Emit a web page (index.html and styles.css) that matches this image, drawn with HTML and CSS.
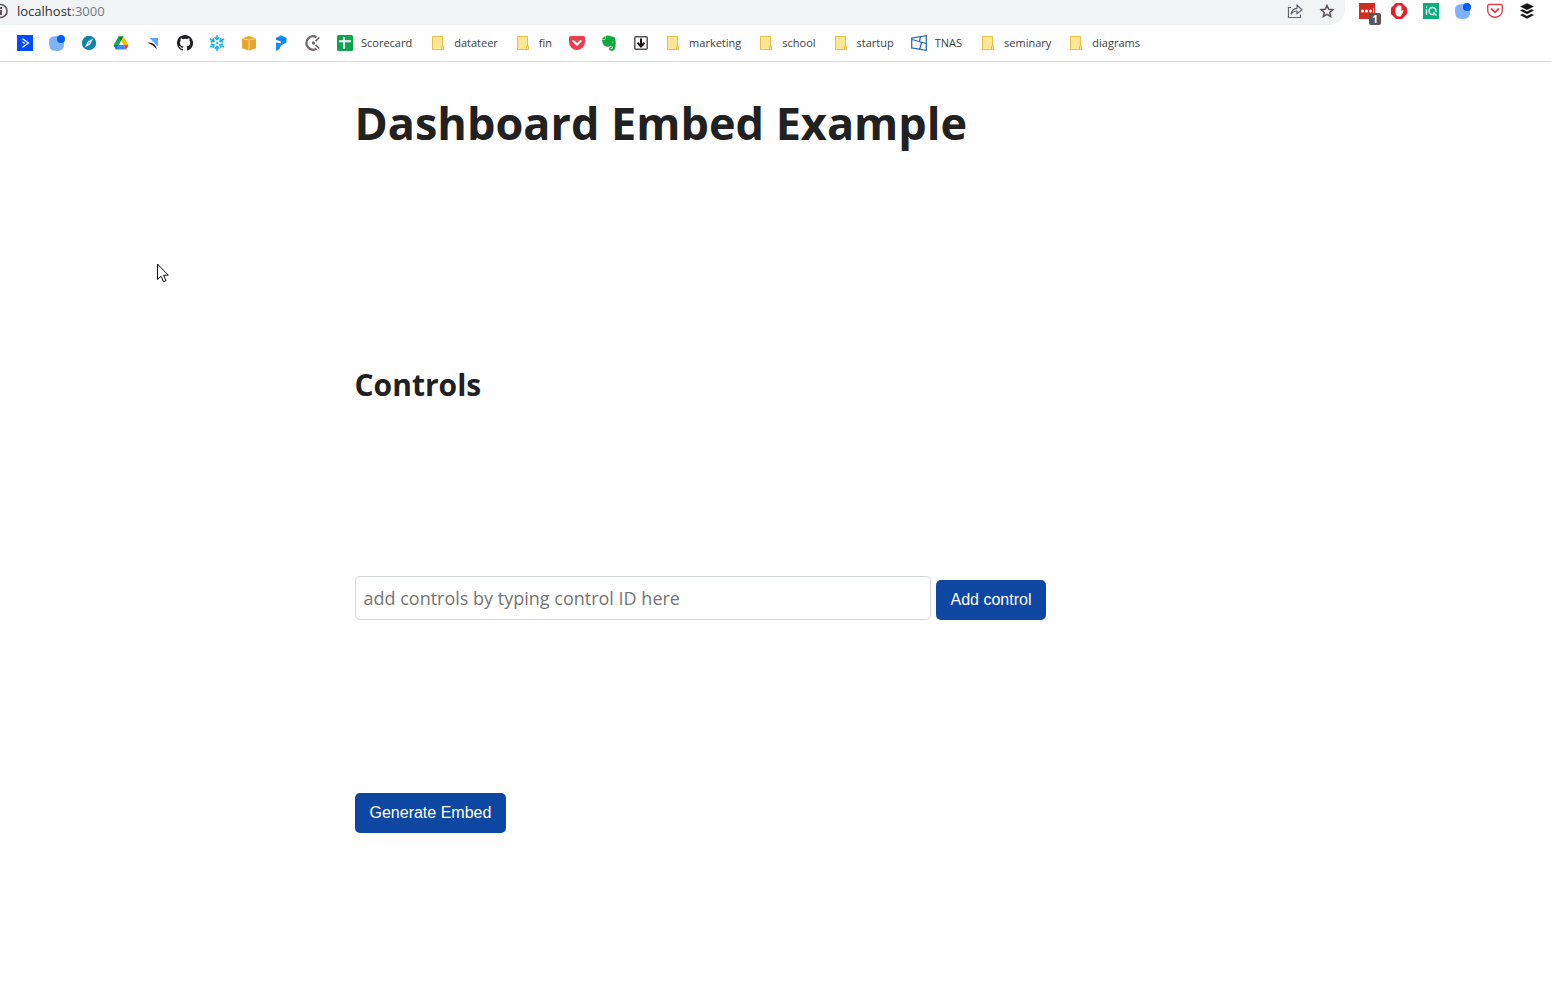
FILE: index.html
```html
<!DOCTYPE html>
<html lang="en">
<head>
<meta charset="utf-8">
<title>Dashboard Embed Example</title>
<link rel="stylesheet" href="styles.css">
</head>
<body>
<svg class="defs" aria-hidden="true">
  <symbol id="folder" viewBox="0 0 16 16"><path d="M2.500 1.500h10v9.500h1v3.500H2.500z" fill="#ffe694" stroke="#e9c046"/><path d="M11.500 14.500v-3.500h2v3.500z" fill="#ffe694" stroke="#e9c046"/></symbol>
  <symbol id="blob" viewBox="0 0 16 16"><path d="M4 1.500Q8 .5 12 1.500Q15 2 15 7V11Q14 16 8 16Q2 16 .8 13Q-.5 8 .5 4Q1 2 4 1.500Z" fill="#80b2fb"/><circle cx="12" cy="4" r="4" fill="#005cff"/></symbol>
</svg>
<header class="browser">
  <div class="toolbar">
    <div class="address">
      <svg class="info" viewBox="0 0 16 16" aria-hidden="true"><circle cx="8.500" cy="8" r="6.500" fill="none" stroke="#5f5357" stroke-width="1.600"/><path d="M9 4v2M9 7v5" stroke="#5f5357" stroke-width="2"/></svg>
      <span class="url">localhost<span class="port">:3000</span></span>
      <button class="tool" aria-label="Share"><svg viewBox="0 0 16 16"><path d="M4 4.500H1.500v10h12v-3M4 11.300C4.500 7.500 7 5.500 10 5.300V2.200l5 4.500-5 4V8C7.500 8 5.500 9 4 11.300z" fill="none" stroke="#62656b" stroke-width="1.200"/></svg></button>
      <button class="tool" aria-label="Bookmark this page"><svg viewBox="0 0 16 16"><path d="M8 2.500l1.700 3.800 4.100.4-3.100 2.700.9 4L8 11.300l-3.600 2.100.9-4-3.100-2.700 4.100-.4z" fill="none" stroke="#5f5357" stroke-width="1.500"/></svg></button>
    </div>
    <div class="extensions">
      <button class="tool" aria-label="Password manager"><svg viewBox="0 0 16 16"><path d="M0 0h16v16H0z" fill="#d32d1f"/><circle cx="3.500" cy="8" r="1.500" fill="#fff"/><circle cx="7.500" cy="8" r="1.500" fill="#fff"/><circle cx="11.500" cy="8" r="1.500" fill="#fff"/><path d="M14.500 5v5" stroke="#fff"/></svg><span class="badge">1</span></button>
      <button class="tool" aria-label="Ad blocker"><svg viewBox="0 0 16 16"><path d="M5 0h6l5 5v6l-5 5H5l-5-5V5z" fill="#e5202c"/><path d="M4.500 7.500V4.500q.8-1 1.400 0V3q.8-1 1.500 0v-.5q.8-1 1.500 0V3q.9-1 1.500 0v5l1.300-1q1 0 .8.800L10.800 12q-.7 1.500-2.600 1.500Q5 13.500 4.500 10z" fill="#fff"/></svg></button>
      <button class="tool" aria-label="iQ"><svg viewBox="0 0 16 16"><path d="M0 0h16v16H0z" fill="#05ae7a"/><path d="M3.500 6v6M3.500 3.500v1.300M11 11.500H9.500A3.500 3.500 0 1 1 13 8v1M10.500 9.500l3 3" fill="none" stroke="#fff" stroke-width="1.300"/></svg></button>
      <button class="tool" aria-label="Workspace"><svg><use href="#blob"/></svg></button>
      <button class="tool" aria-label="Save to Pocket"><svg viewBox="0 0 16 16"><path d="M2.200 1.500h11.600q1.500 0 1.500 1.500v4.500a7.300 6.800 0 0 1-14.600 0V3q0-1.500 1.500-1.500z" fill="none" stroke="#de4350" stroke-width="1.400"/><path d="M4.500 6l3.500 3.300L11.500 6" fill="none" stroke="#de4350" stroke-width="1.800" stroke-linecap="round"/></svg></button>
      <button class="tool" aria-label="Buffer"><svg viewBox="0 0 16 16"><path d="M8 .5l6.500 3L8 6.700 1.500 3.500zM1.500 7.500l2-.9L8 8.700l4.500-2.100 2 .9L8 10.900zM1.500 12l2-.9L8 13.200l4.500-2.100 2 .9L8 15.500z" fill="#111" stroke="#111" stroke-width=".4"/></svg></button>
    </div>
  </div>
  <nav class="bookmarks" aria-label="Bookmarks">
    <a href="#" aria-label="Console"><svg viewBox="0 0 16 16"><path d="M0 0h16v16H0z" fill="#004cff"/><path d="M5.500 3.800L11.500 8l-6 4.200M5.500 7l2.200 1.400" fill="none" stroke="#fff" stroke-width="1.300"/></svg></a>
    <a href="#" aria-label="Workspace"><svg><use href="#blob"/></svg></a>
    <a href="#" aria-label="Compass"><svg viewBox="0 0 16 16"><circle cx="8" cy="8" r="7.200" fill="#0d83ad"/><path d="M12 3.500L9.300 9.200 4 12.500l2.800-6z" fill="#fff"/><circle cx="8" cy="8" r=".8" fill="#0d83ad"/></svg></a>
    <a href="#" aria-label="Drive"><svg viewBox="0 0 16 16"><path d="M5.500 1.500h4.800L3.500 14.500H3L.7 10z" fill="#16a65a"/><path d="M5.500 1.500h5L8 6z" fill="#087b3a"/><path d="M10.500 1.500l5 8.500h-5L8 6z" fill="#ffbe05"/><path d="M.7 10h5L3 14.500z" fill="#1967d2"/><path d="M5.700 10h4.800l2.700 4.500H3z" fill="#4285f4"/><path d="M10.500 10h5l-2.300 4.500z" fill="#e94335"/></svg></a>
    <a href="#" aria-label="Prefect"><svg viewBox="0 0 16 16"><path d="M4.500 3H13v8.500z" fill="#62a9f4"/><path d="M2.500 7.500Q6.500 7 9 9t2.800 5.300L8.300 10.800z" fill="#162447"/></svg></a>
    <a href="#" aria-label="GitHub"><svg viewBox="0 0 16 16"><path d="M8 0C3.580 0 0 3.580 0 8c0 3.540 2.290 6.530 5.470 7.590.4.070.55-.17.55-.38V13.720c-2.010.37-2.530-.49-2.690-.94-.09-.23-.48-.94-.82-1.130-.28-.15-.68-.52-.01-.53.63-.01 1.080.58 1.230.82.72 1.210 1.870.87 2.330.66.07-.52.28-.87.51-1.070-1.780-.2-3.640-.89-3.640-3.950 0-.87.310-1.590.82-2.150-.08-.2-.36-1.020.08-2.120 0 0 .67-.21 2.200.82a7.600 7.600 0 0 1 4 0c1.530-1.040 2.200-.82 2.200-.82.44 1.100.16 1.920.08 2.120.51.560.82 1.270.82 2.150 0 3.070-1.870 3.750-3.650 3.950.29.250.54.73.54 1.480v2.210c0 .21.150.46.55.38A8 8 0 0 0 8 0z" fill="#211f27"/></svg></a>
    <a href="#" aria-label="Snowflake"><svg viewBox="0 0 16 16"><g fill="none" stroke="#12b0f5" stroke-width="1.500"><path id="flake" d="M8 0v4.500M5.700 2.200L8 4.600l2.300-2.400"/><use href="#flake" transform="rotate(60 8 8)"/><use href="#flake" transform="rotate(120 8 8)"/><use href="#flake" transform="rotate(180 8 8)"/><use href="#flake" transform="rotate(240 8 8)"/><use href="#flake" transform="rotate(300 8 8)"/><path d="M8 7l1 1-1 1-1-1z" stroke-width=".8"/></g></svg></a>
    <a href="#" aria-label="AWS"><svg viewBox="0 0 16 16"><path d="M8 1l7 2.200v10L8 15.500 1 13.200v-10z" fill="#e8a52c"/><path d="M1 3.500L8 5l7-1.500M8 5v10" fill="none" stroke="#ffdc88"/></svg></a>
    <a href="#" aria-label="Pipeline"><svg viewBox="0 0 16 16"><path d="M3 3L8 .3 13.500 3v4.500L8 10.500 6.500 14 3 16V7.500L8 8.300V6.500L3 4.700z" fill="#1389fd"/><path d="M3 3l5.500 2.300L13.500 3" fill="none" stroke="#0873df" stroke-width=".8"/></svg></a>
    <a href="#" aria-label="ClickUp"><svg viewBox="0 0 16 16"><path d="M11.500 2.200A6.700 6.700 0 1 0 11.500 13.800" fill="none" stroke="#74686a" stroke-width="2.400"/><circle cx="8.500" cy="8" r="1.700" fill="#74686a"/><path d="M10.500 6.200L14.300 2.500M10.500 9.800l3.800 3.700" stroke="#74686a" stroke-width="1.700"/></svg></a>
    <a href="#" class="site"><svg viewBox="0 0 16 16"><rect width="16" height="16" rx="1.500" fill="#0aa64b"/><path d="M2 6.200h12M7 2v12" stroke="#fff" stroke-width="2"/></svg><span>Scorecard</span></a>
    <a href="#" class="folder"><svg><use href="#folder"/></svg><span>datateer</span></a>
    <a href="#" class="folder"><svg><use href="#folder"/></svg><span>fin</span></a>
    <a href="#" aria-label="Pocket"><svg viewBox="0 0 16 16"><path d="M1.500 1h13q1.500 0 1.500 1.500V7a8 8 0 0 1-16 0V2.500Q0 1 1.500 1z" fill="#e9404f"/><path d="M4.300 6L8 9.500 11.700 6" fill="none" stroke="#fff" stroke-width="2" stroke-linecap="round"/></svg></a>
    <a href="#" aria-label="Evernote"><svg viewBox="0 0 16 16"><path d="M5 .8Q7.500-.2 9.500 1.300q3.800.2 4.500 1.800 1.200 4 .4 9.200-.6 3.500-3.400 3.600-3.200-.1-3-2.700.4-1.900 2.700-1.400v1.300q-1.200-.3-1.200.4 0 .8 1.300.8 1.200-.3 1-2.500-1.400 0-2.100-1.200-.8 1.500-3.400 1.200Q1.500 11.500 1 4.800L4.200 4.500z" fill="#12a83f"/><path d="M.8 4.200L4.200.8V4z" fill="#12a83f"/><path d="M11 7.200q.8-1.300 1.600.2z" fill="#fff"/></svg></a>
    <a href="#" aria-label="Downloads"><svg viewBox="0 0 16 16"><rect x="1.800" y="1.800" width="12.400" height="12.400" rx="1" fill="#fff" stroke="#5e4c51" stroke-width="1.500"/><path d="M8 3.500v8M4.500 7.800L8 11.500l3.500-3.700" fill="none" stroke="#111" stroke-width="2"/></svg></a>
    <a href="#" class="folder"><svg><use href="#folder"/></svg><span>marketing</span></a>
    <a href="#" class="folder"><svg><use href="#folder"/></svg><span>school</span></a>
    <a href="#" class="folder"><svg><use href="#folder"/></svg><span>startup</span></a>
    <a href="#" class="site"><svg viewBox="0 0 16 16"><path d="M.7 3.200L15.300.7v14.600L.7 13zM1 4.500l14 4M8.500 6.500L10.500 8l-2 6.500M8.500 6.500L9.500 1.800" fill="none" stroke="#2c70bd" stroke-width="1.300"/></svg><span>TNAS</span></a>
    <a href="#" class="folder"><svg><use href="#folder"/></svg><span>seminary</span></a>
    <a href="#" class="folder"><svg><use href="#folder"/></svg><span>diagrams</span></a>
  </nav>
</header>
<main class="page">
  <h1>Dashboard Embed Example</h1>
  <h2>Controls</h2>
  <form class="add-control">
    <input type="text" aria-label="Control ID" placeholder="add controls by typing control ID here">
    <button class="action" type="button">Add control</button>
  </form>
  <button class="action" type="button">Generate Embed</button>
</main>
<svg class="cursor" viewBox="0 0 14 20" aria-hidden="true"><path d="M1.500 1v15.500L5 13.200l2.500 5.500 2.500-1-2.500-5.500h4.800z" fill="#fff" stroke="#111"/></svg>
</body>
</html>
```
FILE: styles.css
```css
* { box-sizing: border-box; }

body {
  margin: 0;
  background: #fefefe;
  color: #212121;
  font-family: "Open Sans", "Noto Sans", sans-serif;
}

.defs { position: absolute; width: 0; height: 0; }

.browser { border-bottom: 1px solid #d9dadc; }
.toolbar { display: flex; height: 25px; }

.address {
  flex: 1;
  display: flex;
  align-items: flex-start;
  gap: 16px;
  padding: 3px 10px 0 0;
  overflow: hidden;
  background: #f1f3f4;
  border-radius: 0 0 16px 0;
}
.info { width: 16px; height: 16px; margin-left: -8px; }
.url { flex: 1; margin-left: -7px; font-size: 13px; line-height: 16px; color: #303236; }
.port { color: #777a7e; }

.tool {
  position: relative;
  width: 16px;
  height: 16px;
  padding: 0;
  border: 0;
  background: none;
}
.tool svg, .bookmarks svg { display: block; flex: none; width: 16px; height: 16px; }

.extensions { display: flex; gap: 16px; padding: 3px 16px 0 14px; }

.badge {
  position: absolute;
  left: 10px;
  top: 10px;
  width: 12px;
  height: 12px;
  border-radius: 2px;
  background: #55575b;
  color: #fff;
  font: bold 10px/12px "Open Sans", sans-serif;
  text-align: center;
}

.bookmarks {
  display: flex;
  align-items: center;
  gap: 16px;
  height: 36px;
  padding: 0 17px;
}
.bookmarks a {
  display: flex;
  align-items: center;
  gap: 8px;
  color: #3c4043;
  font-size: 11px;
  line-height: 16px;
  text-decoration: none;
}
.bookmarks .site { padding-right: 2px; }
.bookmarks .folder { padding-right: 1px; }

.page {
  display: flex;
  flex-direction: column;
  align-items: flex-start;
  max-width: 842px;
  margin: 0 auto;
  padding: 31px 0;
}
h1 { margin: 0 0 214px; font-size: 45px; line-height: 60px; }
h2 { margin: 0 0 173px; font-size: 30px; line-height: 36px; }

.add-control { display: flex; align-items: flex-end; gap: 5px; width: 100%; margin-bottom: 173px; }
.add-control input {
  flex: 0 1 576px;
  min-width: 0;
  height: 44px;
  padding: 0 8px;
  border: 1px solid #d5d7e0;
  border-radius: 5px;
  background: #fff;
  color: #212121;
  font: 18px "Open Sans", "Noto Sans", sans-serif;
}
.add-control input::placeholder { color: #757575; }

.action {
  padding: 11px 15px;
  border: 0;
  border-radius: 5px;
  background: #0d47a1;
  color: #fff;
  font: 16px/18px "Liberation Sans", Arial, sans-serif;
}

.cursor { position: absolute; left: 156px; top: 263px; width: 14px; height: 20px; }
```
